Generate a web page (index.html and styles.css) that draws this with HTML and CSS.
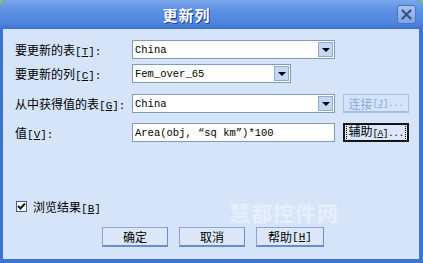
FILE: index.html
```html
<!DOCTYPE html>
<html lang="zh-CN">
<head>
    <meta charset="UTF-8">
    <title>更新列</title>
    <link rel="stylesheet" href="styles.css">
</head>
<body>
    <div class="window">
        <div class="titlebar">
            <span class="title">更新列</span>
            <span class="close">
                <svg width="11" height="11" viewBox="0 0 11 11"><path d="M1.5 1.5 L9.5 9.5 M9.5 1.5 L1.5 9.5" stroke="#3b4f7e" stroke-width="2.2" stroke-linecap="round"/></svg>
            </span>
        </div>
        <div class="content">
            <div class="row row1">
                <label class="lbl">要更新的表<span class="m">[<u>T</u>]:</span></label>
                <div class="combo wide"><span class="val">China</span><span class="arrow"></span></div>
            </div>
            <div class="row row2">
                <label class="lbl">要更新的列<span class="m">[<u>C</u>]:</span></label>
                <div class="combo narrow"><span class="val">Fem_over_65</span><span class="arrow"></span></div>
            </div>
            <div class="row row3">
                <label class="lbl">从中获得值的表<span class="m">[<u>G</u>]:</span></label>
                <div class="combo wide"><span class="val">China</span><span class="arrow"></span></div>
                <button class="btn side disabled">连接<span class="m">[<u>J</u>]...</span></button>
            </div>
            <div class="row row4">
                <label class="lbl">值<span class="m">[<u>V</u>]:</span></label>
                <div class="input wide"><span class="val">Area(obj, “sq km”)*100</span></div>
                <button class="btn side focus"><span class="dots">辅助<span class="m">[<u>A</u>]...</span></span></button>
            </div>
            <div class="check">
                <span class="box">
                    <svg width="9" height="9" viewBox="0 0 9 9"><path d="M1 4 L3.5 6.5 L8 1.5" fill="none" stroke="#1c1c1c" stroke-width="2"/></svg>
                </span>
                <span>浏览结果<span class="m">[<u>B</u>]</span></span>
            </div>
            <div class="buttons">
                <button class="btn">确定</button>
                <button class="btn">取消</button>
                <button class="btn">帮助<span class="m">[<u>H</u>]</span></button>
            </div>
            <div class="watermark">慧都控件网</div>
        </div>
    </div>
</body>
</html>
```

FILE: styles.css
```css
html, body {
    margin: 0;
    padding: 0;
    background: #8cc06a;
}

body {
    width: 423px;
    height: 263px;
    overflow: hidden;
    font-family: "Noto Sans CJK SC", "Noto Sans", sans-serif;
    font-size: 12px;
    color: #000;
}

.window {
    width: 423px;
    height: 263px;
    box-sizing: border-box;
    background: #3f74d4;
    border-radius: 7px 7px 0 0;
    padding: 0 4px 4px 3px;
    display: flex;
    flex-direction: column;
}

.titlebar {
    height: 29px;
    margin: 0 -4px 0 -3px;
    border-radius: 7px 7px 0 0;
    background: linear-gradient(#7ba7ec 0%, #5d91e4 35%, #5287df 75%, #3f72d0 100%);
    display: flex;
    align-items: center;
}

.title {
    flex: 1;
    text-align: center;
    padding-right: 24px;
    color: #fff;
    font-weight: bold;
    font-size: 15px;
    letter-spacing: 1px;
    text-shadow: 1px 1px 0 #1d3f8a;
}

.close {
    width: 17px;
    height: 17px;
    margin-right: 7px;
    border: 1px solid #4a74c4;
    border-radius: 3px;
    background: linear-gradient(#a9c4f0, #7ea3e6);
    display: flex;
    align-items: center;
    justify-content: center;
}

.content {
    flex: 1;
    background: #d5e4f9;
    padding: 11px 0 0 12px;
    position: relative;
    display: flex;
    flex-direction: column;
}

.row {
    display: flex;
    align-items: center;
    height: 19px;
}

.row2 { margin-top: 5px; }
.row3 { margin-top: 11px; }
.row4 { margin-top: 10px; }

.lbl {
    width: 117px;
    white-space: nowrap;
}

.m {
    font-family: "Liberation Mono", monospace;
    font-size: 11px;
}

.combo, .input {
    height: 19px;
    box-sizing: border-box;
    background: #fff;
    border: 1px solid #7f9db9;
    display: flex;
    align-items: center;
    font-family: "Liberation Mono", monospace;
    font-size: 10.5px;
}

.wide { width: 203px; }
.narrow { width: 159px; }

.val {
    flex: 1;
    padding-left: 2px;
    white-space: nowrap;
}

.arrow {
    width: 15px;
    height: 15px;
    margin-right: 1px;
    box-sizing: border-box;
    border: 1px solid #8fa9cf;
    background: #c6d7f2;
    position: relative;
}

.arrow::after {
    content: "";
    position: absolute;
    left: 3px;
    top: 5px;
    border-left: 4px solid transparent;
    border-right: 4px solid transparent;
    border-top: 4px solid #000;
}

.btn {
    font-family: "Noto Sans CJK SC", "Noto Sans", sans-serif;
    font-size: 12px;
    color: #000;
    height: 20px;
    width: 66px;
    padding: 0;
    box-sizing: border-box;
    white-space: nowrap;
    background: #dce8fa;
    border: 1px solid #8aa6d6;
    border-right-color: #6a8cc8;
    border-bottom: 2px solid #6a8cc8;
    display: flex;
    align-items: center;
    justify-content: center;
}

.side {
    height: 19px;
    margin-left: 8px;
}

.side .m {
    font-size: 9.5px;
    letter-spacing: -0.5px;
}

.disabled {
    color: #8ea9d6;
    background: #d5e4f9;
    border-color: #a3bde6;
}

.focus {
    border: 2px solid #1a1a1a;
    background: #dbe7fa;
}

.dots {
    border: 1px dotted #000;
    padding: 0 1px;
    line-height: 12px;
}

.check {
    margin-top: 57px;
    margin-left: 1px;
    display: flex;
    align-items: center;
    gap: 6px;
    height: 14px;
}

.box {
    width: 11px;
    height: 11px;
    box-sizing: border-box;
    border: 1px solid #3a5f9c;
    background: #fff;
    display: flex;
    align-items: center;
    justify-content: center;
}

.buttons {
    margin-top: 14px;
    margin-left: 87px;
    display: flex;
    gap: 11px;
}

.buttons .btn:last-child {
    width: 68px;
}

.watermark {
    position: absolute;
    left: 226px;
    top: 172px;
    font-size: 21px;
    font-weight: bold;
    letter-spacing: 1px;
    color: rgba(255, 255, 255, 0.45);
    line-height: 22px;
    pointer-events: none;
}
```
